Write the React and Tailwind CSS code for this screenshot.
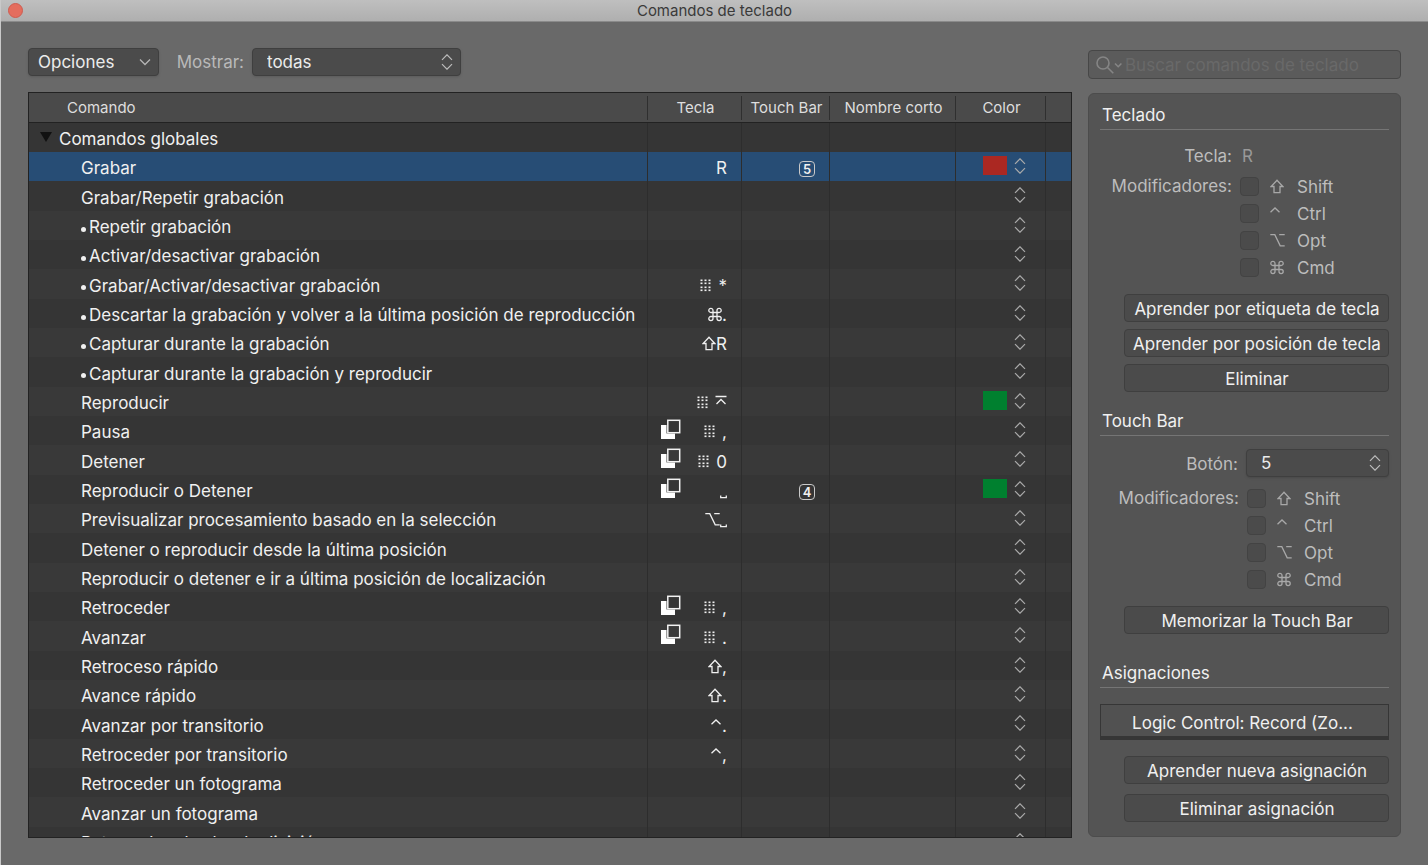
import React, { useState } from 'react';

const SWATCHES = {
  red: 'bg-[#ab2822]',
  green: 'bg-[#00802f]',
};

const COMMANDS = [
  {
    name: 'Grabar', keys: ['R'], touchBar: '5', color: 'red',
  },
  { name: 'Grabar/Repetir grabación' },
  { name: 'Repetir grabación', bullet: true },
  { name: 'Activar/desactivar grabación', bullet: true },
  { name: 'Grabar/Activar/desactivar grabación', bullet: true, keys: ['keypad', '*'] },
  { name: 'Descartar la grabación y volver a la última posición de reproducción', bullet: true, keys: ['cmd', '.'] },
  { name: 'Capturar durante la grabación', bullet: true, keys: ['shift', 'R'] },
  { name: 'Capturar durante la grabación y reproducir', bullet: true },
  { name: 'Reproducir', keys: ['keypad', 'enter'], color: 'green' },
  { name: 'Pausa', several: true, keys: ['keypad', ','] },
  { name: 'Detener', several: true, keys: ['keypad', '0'] },
  {
    name: 'Reproducir o Detener', several: true, keys: ['space'], touchBar: '4', color: 'green',
  },
  { name: 'Previsualizar procesamiento basado en la selección', keys: ['opt', 'space'] },
  { name: 'Detener o reproducir desde la última posición' },
  { name: 'Reproducir o detener e ir a última posición de localización' },
  { name: 'Retroceder', several: true, keys: ['keypad', ','] },
  { name: 'Avanzar', several: true, keys: ['keypad', '.'] },
  { name: 'Retroceso rápido', keys: ['shift', ','] },
  { name: 'Avance rápido', keys: ['shift', '.'] },
  { name: 'Avanzar por transitorio', keys: ['ctrl', '.'] },
  { name: 'Retroceder por transitorio', keys: ['ctrl', ','] },
  { name: 'Retroceder un fotograma' },
  { name: 'Avanzar un fotograma' },
  { name: 'Retroceder el valor de división' },
];

const MODIFIERS = [
  { id: 'shift', label: 'Shift' },
  { id: 'ctrl', label: 'Ctrl' },
  { id: 'opt', label: 'Opt' },
  { id: 'cmd', label: 'Cmd' },
];

function KeyGlyph({ name }) {
  const props = {
    height: 16, fill: 'none', stroke: 'currentColor', strokeWidth: 1.3, 'aria-hidden': true, className: 'shrink-0',
  };
  switch (name) {
    case 'shift':
      return (
        <svg width="14" viewBox="0 0 14 16" {...props}>
          <path d="M7 1.2 12.900 7.500H10v6.200H4V7.500H1.100z" />
        </svg>
      );
    case 'ctrl':
      return (
        <svg width="11" viewBox="0 0 11 16" {...props}>
          <path d="M.5 6.300 5 2l4.500 4.300" />
        </svg>
      );
    case 'opt':
      return (
        <svg width="15" viewBox="0 0 15 16" {...props}>
          <path d="M.3 1.600h4.500L10.200 12.800h4.500M9.200 1.600h5.500" />
        </svg>
      );
    case 'cmd':
      return (
        <svg width="14" viewBox="0 0 14 16" {...props}>
          <path d="M5 5.500V3.400A2.100 2.100 0 1 0 2.900 5.500h8.200A2.100 2.100 0 1 0 9 3.400v8.200a2.100 2.100 0 1 0 2.100-2.100H2.900A2.100 2.100 0 1 0 5 11.600z" />
        </svg>
      );
    case 'enter':
      return (
        <svg width="12" viewBox="0 0 12 16" {...props}>
          <path d="M.5 1.500h11M1.500 9 6 4.500 10.500 9" />
        </svg>
      );
    case 'space':
      return (
        <svg width="7" viewBox="0 0 7 16" {...props}>
          <path d="M.7 12.500v2.200h5.600v-2.200" />
        </svg>
      );
    case 'keypad':
      return (
        <svg width="12" viewBox="0 0 12 16" {...props} stroke="none" fill="currentColor">
          {[0, 4, 8].map((x) => [1, 4, 8, 11].map((y) => (
            <rect key={`${x}-${y}`} x={x + 0.5} y={y + 0.5} width="2" height="1.600" />
          )))}
        </svg>
      );
    default:
      return <span>{name}</span>;
  }
}

function CopyIcon() {
  return (
    <svg width="20" height="20" viewBox="0 0 20 20" className="mb-1 shrink-0" aria-label="Varias asignaciones" role="img">
      <path d="M0 6h5.500v8.500H14V20H0z" fill="#fff" />
      <rect x="6.800" y="1.300" width="11.900" height="12.400" fill="none" stroke="#f2f2f2" strokeWidth="1.500" />
    </svg>
  );
}

function Stepper() {
  return (
    <svg width="12" height="16" viewBox="0 0 12 16" fill="none" stroke="currentColor" strokeWidth="1.200" aria-hidden="true">
      <path d="M1 5.800 6 .8l5 5M1 10.200l5 5 5-5" />
    </svg>
  );
}

function SelectBox({
  id, value, className, children,
}) {
  return (
    <div className={`relative h-7 ${className}`}>
      <select
        id={id}
        defaultValue={value}
        className="h-full w-full appearance-none rounded border border-[#3f3f3f] bg-[#4b4b4b] pr-8 pl-[14px] text-[17px] leading-6 text-[#ececec] shadow-sm"
      >
        {children}
      </select>
      <span className="pointer-events-none absolute inset-y-0 right-2 flex items-center text-[#bdbdbd]">
        <Stepper />
      </span>
    </div>
  );
}

function PanelButton({ children }) {
  return (
    <button
      type="button"
      className="block h-7 w-full rounded border border-[#3f3f3f] bg-[#4b4b4b] pt-px pl-px text-center leading-6 whitespace-nowrap text-[#f0f0f0] hover:bg-[#555]"
    >
      {children}
    </button>
  );
}

function SectionTitle({ children }) {
  return (
    <h2 className="border-b border-[#757575] pb-0.5 pl-0.5 leading-6 text-[#f0f0f0]">{children}</h2>
  );
}

function Modifiers({ prefix, labelWidth }) {
  return (
    <div role="group" aria-labelledby={`${prefix}-modifiers`} className="flex gap-2">
      <span id={`${prefix}-modifiers`} className={`${labelWidth} text-right leading-6`}>Modificadores:</span>
      <div className="flex flex-col gap-2 pt-[3px]">
        {MODIFIERS.map((mod) => (
          <label key={mod.id} htmlFor={`${prefix}-${mod.id}`} className="flex h-[19px] items-center">
            <input
              id={`${prefix}-${mod.id}`}
              type="checkbox"
              className="size-[19px] appearance-none rounded border border-[#434343] bg-[#4b4b4b] checked:bg-[#8a8a8a]"
            />
            <span className="ml-[11px] flex w-[27px] text-[#a8a8a8]">
              <KeyGlyph name={mod.id} />
            </span>
            {mod.label}
          </label>
        ))}
      </div>
    </div>
  );
}

function CommandRow({ command, selected, onSelect }) {
  const cell = 'border-r border-[#2d2d2d] p-0';
  return (
    <tr
      onClick={onSelect}
      aria-selected={selected}
      className={`h-[29px] nth-[3n]:h-[30px] ${selected ? 'bg-[#274d75]' : 'even:bg-[#393939] odd:bg-[#353535]'}`}
    >
      <td className={`${cell} overflow-hidden pt-[3px] pl-[52px] leading-6 whitespace-nowrap`}>
        <span className="flex items-center">
          {command.bullet && <span className="mt-1 mr-[3px] size-[5px] rounded-full bg-[#f0f0f0]" />}
          {command.name}
        </span>
      </td>
      <td className={`${cell} pr-[14px] pl-[13px] leading-6`}>
        <div className="flex items-center">
          {command.several && <CopyIcon />}
          <span className="ml-auto flex items-center pt-[3px]">
            {command.keys?.map((key, i) => (
              <span key={key} className={i > 0 && command.keys[0] === 'keypad' ? 'ml-1.5' : ''}>
                <KeyGlyph name={key} />
              </span>
            ))}
          </span>
        </div>
      </td>
      <td className={`${cell} pr-[14px]`}>
        {command.touchBar && (
          <span className="mt-1 ml-auto flex size-4 items-center justify-center rounded border border-[#c9c9c9] text-[13px] leading-4 font-semibold">
            {command.touchBar}
          </span>
        )}
      </td>
      <td className={cell} />
      <td className={`${cell} pr-[19px] pb-0.5`}>
        <div className="flex items-center justify-end gap-[7px]">
          {command.color && <span className={`h-[19px] w-6 ${SWATCHES[command.color]}`} />}
          <button type="button" aria-label={`Color de ${command.name}`} className="block text-[#ababab]">
            <Stepper />
          </button>
        </div>
      </td>
      <td className="p-0" />
    </tr>
  );
}

function HeaderCell({ children }) {
  return (
    <th scope="col" className="h-[30px] border-b border-[#222] p-0 font-normal">
      <div className="flex h-6 items-center justify-center border-r border-[#2f2f2f] pl-0.5">{children}</div>
    </th>
  );
}

export default function App() {
  const [selected, setSelected] = useState(0);

  return (
    <div className="flex h-screen flex-col overflow-hidden border-l border-[#c9c9c9] bg-[#696969] font-['Inter',sans-serif] text-[17px] leading-6">
      <header className="relative flex h-[22px] shrink-0 items-center justify-center border-b border-[#8a8a8a] bg-linear-to-b from-[#bfbfbf] to-[#afafaf]">
        <button
          type="button"
          aria-label="Cerrar"
          className="absolute left-[7px] size-[15px] rounded-full border border-[#cf5c50] bg-[#e46d5e]"
        />
        <h1 className="text-[15px] leading-5 text-[#3a3a3a]">Comandos de teclado</h1>
      </header>

      <div className="flex min-h-0 flex-1 gap-4 pr-[27px] pb-[27px] pl-[27px]">
        <main className="flex min-w-0 flex-1 flex-col pt-[26px]">
          <div className="flex items-center">
            <button
              type="button"
              className="flex h-7 w-[131px] items-center justify-between rounded border border-[#3f3f3f] bg-[#4b4b4b] pr-[7px] pl-[9px] text-[#ececec] shadow-sm"
            >
              Opciones
              <svg width="12" height="8" viewBox="0 0 12 8" fill="none" stroke="#b5b5b5" strokeWidth="1.300" aria-hidden="true">
                <path d="m1 1.500 5 5 5-5" />
              </svg>
            </button>
            <label htmlFor="show" className="w-[93px] pr-2 text-right text-[#b9b9b9]">Mostrar:</label>
            <SelectBox id="show" value="todas" className="w-[209px]">
              <option>todas</option>
              <option>usadas</option>
              <option>no usadas</option>
            </SelectBox>
          </div>

          <div className="mt-4 min-h-0 flex-1 overflow-hidden border border-[#222] bg-[#373737]">
            <table className="w-full table-fixed border-separate border-spacing-0 text-[#f0f0f0]">
              <colgroup>
                <col />
                <col className="w-[94px]" />
                <col className="w-[88px]" />
                <col className="w-[126px]" />
                <col className="w-[90px]" />
                <col className="w-[25px]" />
              </colgroup>
              <thead className="bg-[#4a4a4a] text-[15px] leading-5 text-[#dedede]">
                <tr>
                  <th scope="col" className="h-[30px] border-b border-[#222] p-0 text-left font-normal">
                    <div className="flex h-6 items-center border-r border-[#2f2f2f] pl-[38px]">Comando</div>
                  </th>
                  <HeaderCell>Tecla</HeaderCell>
                  <HeaderCell>Touch Bar</HeaderCell>
                  <HeaderCell>Nombre corto</HeaderCell>
                  <HeaderCell>Color</HeaderCell>
                  <td className="border-b border-[#222] p-0" />
                </tr>
              </thead>
              <tbody>
                <tr className="h-[29px] bg-[#353535]">
                  <td className="border-r border-[#2d2d2d] p-0 pt-[3px] pl-[11px]">
                    <span className="flex items-center">
                      <svg width="12" height="10" viewBox="0 0 12 10" className="mr-[7px] mb-1" aria-hidden="true">
                        <path d="M0 0h12L6 10z" fill="#111" />
                      </svg>
                      Comandos globales
                    </span>
                  </td>
                  <td className="border-r border-[#2d2d2d] p-0" />
                  <td className="border-r border-[#2d2d2d] p-0" />
                  <td className="border-r border-[#2d2d2d] p-0" />
                  <td className="border-r border-[#2d2d2d] p-0" />
                  <td className="p-0" />
                </tr>
                {COMMANDS.map((command, i) => (
                  <CommandRow
                    key={command.name}
                    command={command}
                    selected={i === selected}
                    onSelect={() => setSelected(i)}
                  />
                ))}
              </tbody>
            </table>
          </div>
        </main>

        <aside className="w-[313px] shrink-0 pt-7">
          <label htmlFor="search" className="mb-[14px] flex h-[29px] items-center rounded border border-[#474747] bg-[#5b5b5b] pl-[7px]">
            <svg width="26" height="18" viewBox="0 0 26 18" fill="none" stroke="#858585" strokeWidth="1.600" aria-hidden="true">
              <circle cx="7" cy="7" r="6" />
              <path d="m11.300 11.300 6 6M19 7.500l3.200 3.200 3.200-3.200" />
            </svg>
            <input
              id="search"
              type="search"
              aria-label="Buscar comandos de teclado"
              placeholder="Buscar comandos de teclado"
              className="min-w-0 flex-1 bg-transparent pl-[3px] text-[#eee] outline-none placeholder:text-[#696969]"
            />
          </label>

          <div className="rounded-md border border-[#4c4c4c] bg-[#545454] px-[11px] pt-[9px] pb-[14px] text-[#bdbdbd]">
            <section>
              <SectionTitle>Teclado</SectionTitle>
              <div className="mt-[14px] flex gap-[10px]">
                <span className="w-[132px] text-right">Tecla:</span>
                <span className="text-[#999]">R</span>
              </div>
              <div className="mt-[6px]">
                <Modifiers prefix="key" labelWidth="w-[132px]" />
              </div>
              <div className="mt-[17px] ml-6 flex flex-col gap-[7px]">
                <PanelButton>Aprender por etiqueta de tecla</PanelButton>
                <PanelButton>Aprender por posición de tecla</PanelButton>
                <PanelButton>Eliminar</PanelButton>
              </div>
            </section>

            <section className="mt-[17px]">
              <SectionTitle>Touch Bar</SectionTitle>
              <div className="mt-[13px] flex items-center gap-2">
                <label htmlFor="tb-button" className="w-[138px] pt-0.5 text-right">Botón:</label>
                <SelectBox id="tb-button" value="5" className="flex-1">
                  {['1', '2', '3', '4', '5', '6', '7', '8'].map((n) => <option key={n}>{n}</option>)}
                </SelectBox>
              </div>
              <div className="mt-[9px]">
                <Modifiers prefix="tb" labelWidth="w-[139px]" />
              </div>
              <div className="mt-[17px] ml-6">
                <PanelButton>Memorizar la Touch Bar</PanelButton>
              </div>
            </section>

            <section className="mt-[27px]">
              <SectionTitle>Asignaciones</SectionTitle>
              <div className="mt-4 h-9 truncate border border-b-4 border-[#363636] bg-[#515151] pt-[6px] pr-1 text-center text-[#f0f0f0]">
                Logic Control: Record (Zo...
              </div>
              <div className="mt-4 ml-6 flex flex-col gap-[10px]">
                <PanelButton>Aprender nueva asignación</PanelButton>
                <PanelButton>Eliminar asignación</PanelButton>
              </div>
            </section>
          </div>
        </aside>
      </div>
    </div>
  );
}
